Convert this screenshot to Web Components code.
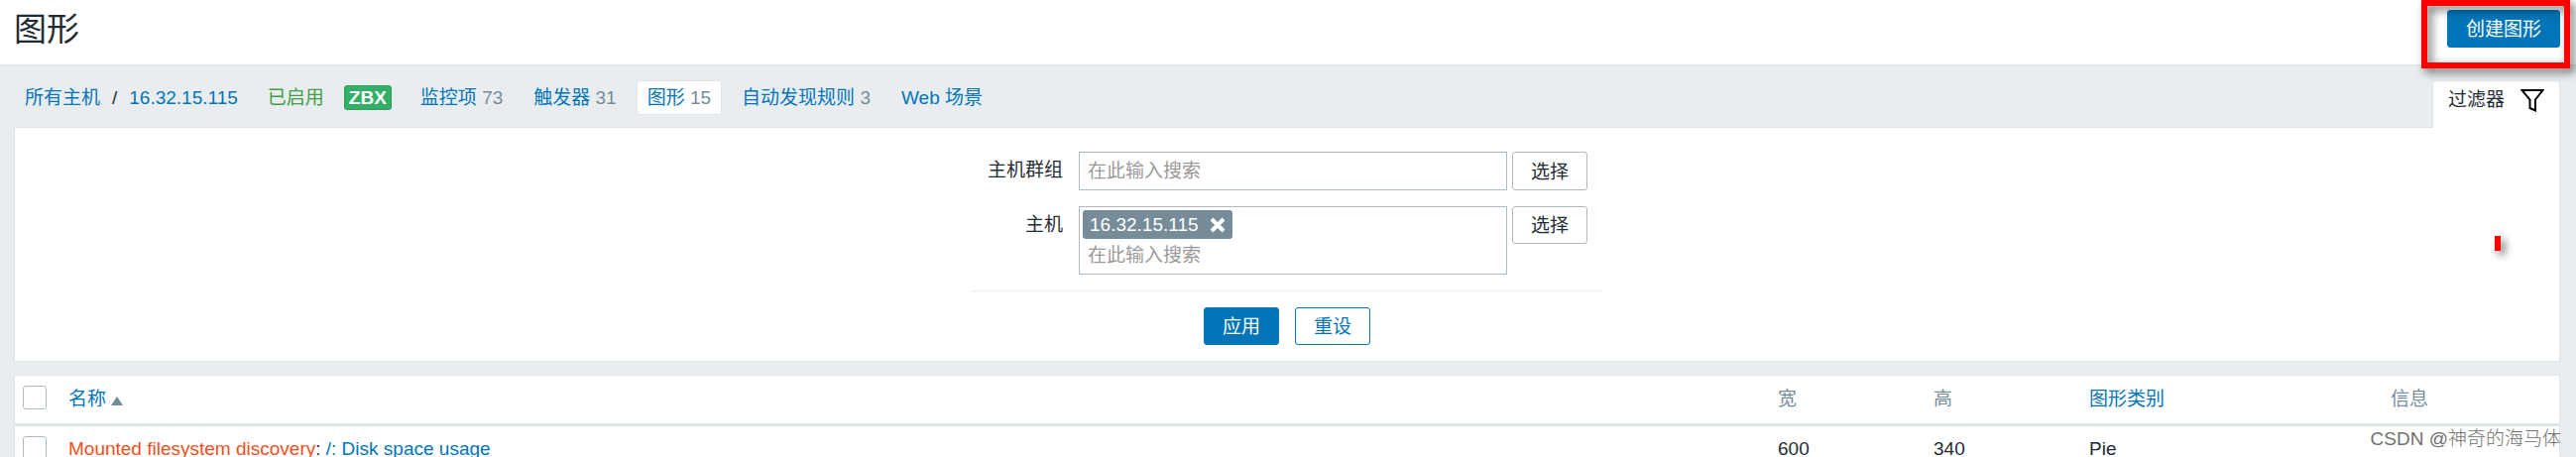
<!DOCTYPE html>
<html lang="zh-CN">
<head>
<meta charset="utf-8">
<title>图形</title>
<style>
  :root {
    --link: #0275b8;
    --text: #1f2c33;
    --grey: #768d99;
    --line: #dfe4e7;
    --field-line: #acbbc2;
    --page: #e9edf0;
  }
  body {
    margin: 0;
    min-height: 100vh;
    box-sizing: border-box;
    overflow: hidden;
    background: var(--page);
    color: var(--text);
    font: 400 19px/24px "Liberation Sans", "Noto Sans CJK SC", sans-serif;
  }
  main { padding: 0 16px 0 14px; }
</style>
</head>
<body>
<page-header heading="图形"><action-button variant="primary">创建图形</action-button></page-header>
<main>
  <host-nav></host-nav>
  <filter-panel>
    <filter-field label="主机群组"></filter-field>
    <filter-field label="主机" chip="16.32.15.115"></filter-field>
    <action-button slot="actions" variant="primary">应用</action-button>
    <action-button slot="actions" variant="outline">重设</action-button>
  </filter-panel>
  <graph-table></graph-table>
</main>
<screen-marks></screen-marks>

<script>
class Base extends HTMLElement {
  constructor() { super(); this.attachShadow({ mode: "open" }); }
  connectedCallback() { this.shadowRoot.innerHTML = this.render(); }
}

customElements.define("action-button", class extends Base {
  render() {
    return `<style>
      :host { display: block; }
      button { font: inherit; height: 38px; min-width: 76px; padding: 2px 18px 0; border: 1px solid var(--field-line);
        border-radius: 3px; background: #fff; color: var(--text); box-sizing: border-box; display: block; }
      :host([tall]) button { height: 39px; }
      :host([variant=primary]) button { background: var(--link); border-color: var(--link); color: #fff; }
      :host([variant=outline]) button { border-color: var(--link); color: var(--link); }
    </style><button type="button"><slot></slot></button>`;
  }
});

customElements.define("page-header", class extends Base {
  render() {
    return `<style>
      :host { display: block; }
      header { display: flex; justify-content: space-between; align-items: flex-start; background: #fff;
        border-bottom: 1px solid var(--line); padding: 10px 16px 15px 14px; }
      h1 { margin: 0; font-size: 33px; line-height: 40px; font-weight: 400; }
    </style><header><h1>${this.getAttribute("heading")}</h1><slot></slot></header>`;
  }
});

customElements.define("host-nav", class extends Base {
  render() {
    return `<style>
      :host { display: flex; justify-content: space-between; align-items: flex-end; padding-top: 15px; }
      nav { display: flex; align-items: center; height: 35px; margin-bottom: 12px; padding-left: 11px; }
      a { color: var(--link); text-decoration: none; white-space: nowrap; }
      span { color: var(--grey); }
      .sep { color: var(--text); padding: 0 12px; }
      .on { color: #429e47; padding: 0 20px 0 30px; }
      .zbx { background: #34af67; border: 1px solid #2f9f5e; color: #fff; border-radius: 3px; padding: 1px 4px 0;
        line-height: 22px; font-weight: 700; margin-right: 18px; }
      .tab { padding: 4px 10px; border: 1px solid transparent; border-radius: 3px; margin-right: 9px; line-height: 25px; }
      .tab.current { background: #fff; border-color: var(--line); }
      .filter { display: flex; align-items: center; gap: 16px; background: #fff; border: 1px solid var(--line); border-bottom: 0;
        border-radius: 3px 3px 0 0; color: var(--text); padding: 0 15px 9px; height: 38px; margin-bottom: -1px;
        position: relative; }
      svg { display: block; }
    </style>
    <nav>
      <a href="#">所有主机</a><span class="sep">/</span><a href="#">16.32.15.115</a>
      <a href="#" class="on">已启用</a><span class="zbx">ZBX</span>
      <a href="#" class="tab">监控项 <span>73</span></a>
      <a href="#" class="tab">触发器 <span>31</span></a>
      <a href="#" class="tab current">图形 <span>15</span></a>
      <a href="#" class="tab">自动发现规则 <span>3</span></a>
      <a href="#" class="tab">Web 场景</a>
    </nav>
    <a href="#" class="filter">过滤器<svg width="24" height="24" viewBox="0 0 24 24" fill="none" stroke="#000" stroke-width="2"><path d="M1.5 2h21L15 11.500V22.500L9.500 20V11.500Z"/></svg></a>`;
  }
});

customElements.define("filter-panel", class extends Base {
  render() {
    return `<style>
      :host { display: block; background: #fff; border: 1px solid var(--line); padding: 24px 0 16px; margin-bottom: 13px; }
      form { width: 638px; margin: 0 auto; }
      .fields { display: grid; gap: 16px; padding-bottom: 16px; border-bottom: 1px solid #ebeef0; }
      .actions { display: flex; justify-content: center; gap: 16px; padding-top: 16px; }
    </style><form><div class="fields"><slot></slot></div><div class="actions"><slot name="actions"></slot></div></form>`;
  }
});

customElements.define("filter-field", class extends Base {
  render() {
    const chip = this.getAttribute("chip");
    return `<style>
      :host { display: grid; grid-template-columns: 93px 1fr 76px; align-items: start; padding-right: 16px; }
      label { text-align: right; padding-top: 7px; }
      .box { display: grid; gap: 1px; justify-items: start; border: 1px solid var(--field-line); padding: 3px 3px 5px; margin: 0 5px 0 16px; }
      input { font: inherit; width: 100%; height: 29px; border: 0; padding: 2px 5px 0; box-sizing: border-box; background: none; outline: 0; }
      input::placeholder { color: #9a9a9a; }
      .chip { display: flex; align-items: center; gap: 11px; height: 29px; box-sizing: border-box; padding: 0 7px; border-radius: 3px;
        background: var(--grey); color: #fff; line-height: 28px; }
      .chip button { border: 0; background: none; padding: 0; display: block; }
      svg { display: block; }
    </style>
    <label for="q">${this.getAttribute("label")}</label>
    <div class="box">${chip ? `<div class="chip">${chip}<button type="button" aria-label="移除"><svg width="16" height="16" viewBox="0 0 16 16" stroke="#fff" stroke-width="4"><path d="M2 2l12 12M14 2L2 14"/></svg></button></div>` : ""}
      <input id="q" type="text" placeholder="在此输入搜索"></div>
    <action-button ${chip ? "" : "tall"}>选择</action-button>`;
  }
});

customElements.define("graph-table", class extends Base {
  render() {
    return `<style>
      :host { display: block; background: #fff; border: 1px solid var(--line); }
      table { width: 100%; table-layout: fixed; border-collapse: separate; border-spacing: 0; }
      th, td { text-align: left; font-weight: inherit; padding: 0 8px; height: 46px; vertical-align: middle; }
      th { color: var(--grey); border-bottom: 3px solid var(--line); height: 48px; }
      td { border-bottom: 1px solid #ebeef0; }
      a { color: var(--link); text-decoration: none; }
      a.rule { color: #f24f1d; }
      .check { width: 30px; height: 36px; padding-top: 10px; vertical-align: top; }
      .size { width: 141px; }
      .kind { width: 288px; }
      .info { width: 162px; }
      input { appearance: none; display: block; width: 24px; height: 24px; margin: 0; box-sizing: border-box;
        border: 1px solid var(--field-line); border-radius: 3px; background: #fff; }
      .up { display: inline-block; border: 6px solid transparent; border-top: 0; border-bottom: 9px solid var(--grey); margin-left: 5px; }
    </style>
    <table>
      <thead><tr><th class="check"><input type="checkbox" aria-label="全选"></th><th><a href="#">名称<i class="up"></i></a></th>
        <th class="size">宽</th><th class="size">高</th><th class="kind"><a href="#">图形类别</a></th><th class="info">信息</th></tr></thead>
      <tbody><tr><td class="check"><input type="checkbox" aria-label="选择此行"></td>
        <td><a href="#" class="rule">Mounted filesystem discovery</a>: <a href="#">/: Disk space usage</a></td>
        <td>600</td><td>340</td><td>Pie</td><td></td></tr></tbody>
    </table>`;
  }
});

/* Pen marks and the author's signature, laid over the page. */
customElements.define("screen-marks", class extends Base {
  render() {
    return `<style>
      :host { position: absolute; inset: 0; pointer-events: none; overflow: hidden; }
      div, p { position: absolute; margin: 0; }
      .frame { top: 0; right: 6px; width: 150px; height: 69px; box-sizing: border-box; border: 6px solid #f00;
        filter: drop-shadow(4px 4px 5px rgba(0,0,0,.6)); }
      .dot { top: 238px; right: 76px; width: 6px; height: 15px; background: #f00; box-shadow: 4px 4px 9px rgba(0,0,0,.6); }
      p { right: 15px; top: 431px; font-weight: 300; color: #707070; text-shadow: 1px 1px 0 #fff; white-space: nowrap; }
    </style><div class="frame"></div><div class="dot"></div><p>CSDN @神奇的海马体</p>`;
  }
});
</script>
</body>
</html>
